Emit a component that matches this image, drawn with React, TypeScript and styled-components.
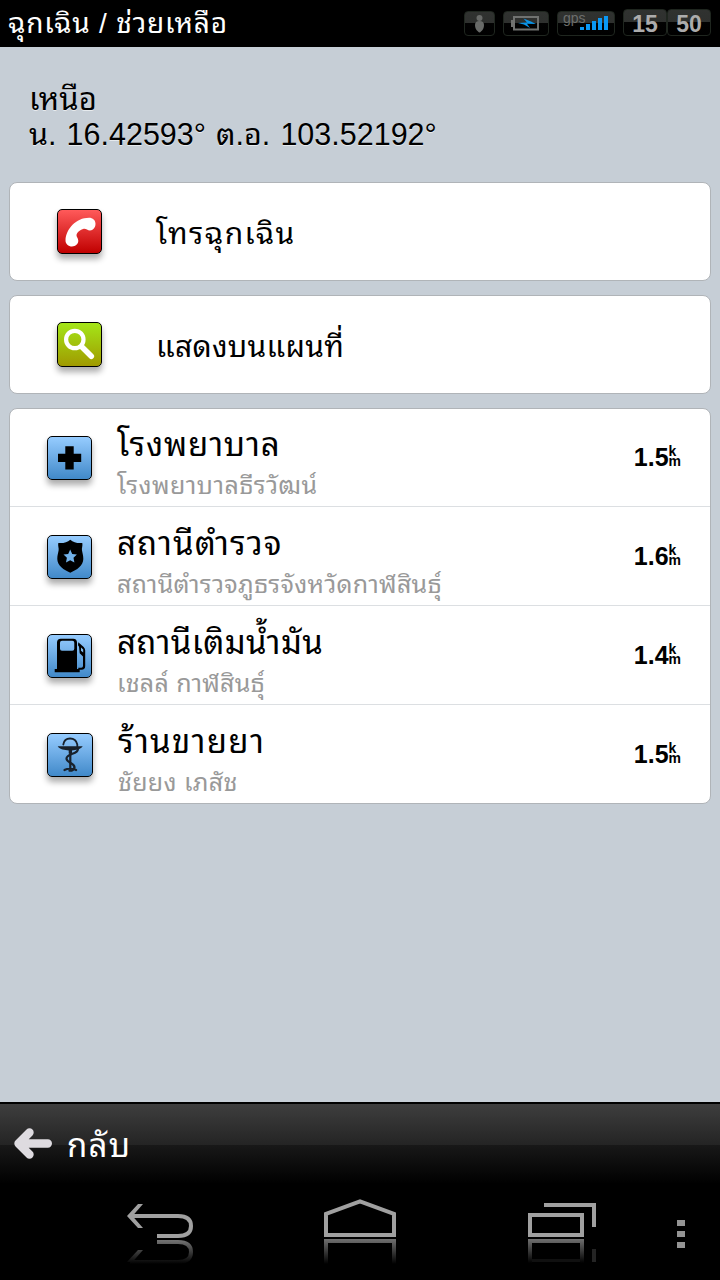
import React from 'react';
import styled, { createGlobalStyle } from 'styled-components';

const GlobalStyle = createGlobalStyle`
  * { box-sizing: border-box; }
  body { margin: 0; background: #000; }
`;

const Screen = styled.div`
  width: 720px;
  height: 1280px;
  display: flex;
  flex-direction: column;
  overflow: hidden;
  background: #c6ced6;
  color: #000;
  font-family: 'Liberation Sans', 'Noto Sans Thai Looped', 'Loma', 'Garuda', 'Waree', 'Noto Sans Thai', sans-serif;
`;

const Header = styled.header`
  height: 47px;
  flex: none;
  display: flex;
  justify-content: space-between;
  padding: 0 9px 0 8px;
  background: #000;
`;

const Label = styled.span<{ $size: number; $line: number; $color?: string; $spacing?: number; $words?: number; $glow?: boolean }>`
  display: block;
  white-space: nowrap;
  font-size: ${(p) => p.$size}px;
  line-height: ${(p) => p.$line}px;
  color: ${(p) => p.$color ?? '#000'};
  letter-spacing: ${(p) => p.$spacing ?? 0}px;
  word-spacing: ${(p) => p.$words ?? 0}px;
  text-shadow: ${(p) => (p.$glow ? '0 1px 0 rgba(255,255,255,0.6)' : 'none')};
`;

const StatusBar = styled.div`
  display: flex;
  align-items: flex-start;
  gap: 8px;
  padding-top: 9px;
`;

const Pill = styled.div<{ $width: number; $tall?: boolean }>`
  width: ${(p) => p.$width}px;
  height: ${(p) => (p.$tall ? 27 : 25)}px;
  margin-top: ${(p) => (p.$tall ? 0 : 2)}px;
  border: 1px solid #1f261f;
  border-radius: 4px;
  background: linear-gradient(#303230 0, #2e302e 50%, #020202 50%, #000 100%);
  display: flex;
  justify-content: center;
  svg { display: block; overflow: visible; }
`;

const Clock = styled.div`
  display: flex;
`;

const Digits = styled.span`
  font-size: 23px;
  font-weight: bold;
  line-height: 28px;
  color: #acacac;
`;

const GpsText = styled.text`
  font-size: 14px;
  fill: #6c6e6c;
`;

const Main = styled.main`
  flex: 1;
  min-height: 0;
  padding: 35px 9px 0;
  display: flex;
  flex-direction: column;
`;

const Position = styled.div`
  height: 86px;
  padding-left: 20px;
  margin-bottom: 14px;
`;

const Card = styled.section`
  flex: none;
  width: 702px;
  margin-bottom: 14px;
  background: #fff;
  border: 1px solid #b0b4b8;
  border-radius: 8px;
`;

const ActionRow = styled.div`
  height: 97px;
  display: flex;
  align-items: flex-start;
  padding: 26px 0 0 47px;
`;

const ActionText = styled.div`
  margin-left: 54px;
  padding-top: 5px;
`;

const PlaceRow = styled.div`
  height: 99px;
  display: flex;
  align-items: flex-start;
  padding: 28px 29px 0 37px;
  border-bottom: 1px solid #dcdfe2;
  &:first-child { height: 98px; padding-top: 27px; }
  &:last-child { border-bottom: 0; height: 98px; }
`;

const Tile = styled.div<{ $from: string; $to: string; $height?: number; $width?: number }>`
  flex: none;
  width: ${(p) => p.$width ?? 45}px;
  height: ${(p) => p.$height ?? 45}px;
  border: 1px solid #000;
  border-radius: 5px;
  background: linear-gradient(${(p) => p.$from}, ${(p) => p.$to});
  box-shadow: 0 5px 6px rgba(0, 0, 0, 0.33);
  svg { display: block; margin: -1px; }
`;

const PlaceText = styled.div`
  flex: 1;
  margin-left: 25px;
  margin-top: -13px;
`;

const Distance = styled.div`
  display: flex;
  font-weight: bold;
  font-size: 25px;
  line-height: 28px;
  margin-top: 7px;
`;

const Unit = styled.span`
  display: flex;
  flex-direction: column;
  font-size: 14px;
  line-height: 10px;
  padding-top: 3px;
`;

const BackBar = styled.footer`
  flex: none;
  height: 84px;
  border-top: 2px solid #000;
  display: flex;
  background: linear-gradient(#3e3e3e 0, #242424 41px, #181818 41px, #000 80px);
  svg { display: block; margin: 22px 0 0 12px; }
`;

const BackText = styled.div`
  margin: 22px 0 0 13px;
`;

const NavBar = styled.nav`
  flex: none;
  height: 94px;
  background: #000;
  display: grid;
  grid-template-columns: 197px 204px 149px 10px;
  padding: 12px 0 0 127px;
  svg { display: block; }
`;

const Arrow = () => (
  <svg width="42" height="36" viewBox="0 0 42 36">
    <path d="M17.500 6.500 6.500 17.500 17.500 28.500M8 17.500H35.800" fill="none" stroke="#dedbe0" strokeWidth="8.400" strokeLinecap="round" strokeLinejoin="round" />
  </svg>
);

const PhoneIcon = () => (
  <svg width="45" height="45" viewBox="0 0 45 45">
    <path fill="#fff" d="M8.500 31C9 20 19 8.700 32 8.700c3.800 0 6.500 2.400 6.500 6.100 0 4-2.500 6.600-5.500 6.600-2.600 0-4-2-6.300-1.600-3.500.8-6.700 3.700-7.200 6.200-.3 1.500 1.800 3 1.800 5.800 0 3.300-2.800 5.700-6.300 5.700S8.300 35 8.500 31Z" />
  </svg>
);

const SearchIcon = () => (
  <svg width="45" height="45" viewBox="0 0 45 45" fill="none" stroke="#fff">
    <circle cx="17.800" cy="17.500" r="8.700" strokeWidth="4.200" />
    <path d="m25 25 9.300 9.300" strokeWidth="5.600" strokeLinecap="round" />
  </svg>
);

const CrossIcon = () => (
  <svg width="45" height="44" viewBox="0 0 45 44">
    <path d="M18.300 10.300h8.400v7.500h7.500v8.200h-7.500v7.400h-8.400V26H11v-8.200h7.300Z" />
  </svg>
);

const ShieldIcon = () => (
  <svg width="45" height="44" viewBox="0 0 45 44">
    <path d="M23.300 4.700c3 2.600 7 3.800 12 3.300.6 3-.8 5-.3 7.500.5 2.700 1.300 5 1.300 8.500 0 6.500-6.500 11-13 13.700C16.800 35 10.300 30.500 10.300 24c0-3.500.8-5.800 1.300-8.500.5-2.500-.9-4.500-.3-7.500 5 .5 9-.7 12-3.300Z" />
    <path fill="#72b2ea" d="m23.200 14.600 2 4.300 4.700.6-3.400 3.300.9 4.700-4.200-2.300-4.200 2.300.9-4.700-3.400-3.300 4.700-.6Z" />
  </svg>
);

const FuelIcon = () => (
  <svg width="45" height="44" viewBox="0 0 45 44">
    <path fillRule="evenodd" d="M10 8.500q0-3.800 3.800-3.800h12.400Q30 4.700 30 8.500V35h2.700v3.300h-25V35H10ZM15 6.700q-2 0-2 2v6q0 2 2 2h10.300q2 0 2-2v-6q0-2-2-2Z" />
    <path d="M31.300 8.300 36.700 13q1.500 1.500 1.500 3.500V32q0 3.800-3.700 3.800h-3.200v-2h3q1.700 0 1.700-1.800v-9.500l-3.300-3.200-.7-6.500-1-1.500Z" />
    <path d="M34 13.500v3.300l2.200 1.700v-3Z" fill="#82bdf0" />
  </svg>
);

const PharmacyIcon = () => (
  <svg width="46" height="44" viewBox="0 0 46 44" fill="none" stroke="#18212b" strokeLinecap="round">
    <path d="M16.300 11.500C17.500 3.500 28.500 3.500 30.300 11.500v2" strokeWidth="1.800" />
    <path d="M10.700 13.300h25c-2.500 3.700-6.700 3.400-10.700 4.200v3h-3.300v-3c-4-.7-8.800-.5-11-4.200Z" fill="#18212b" stroke="none" />
    <path d="M23.300 17v19M17.500 37q3-1.500 5.800-1.200 3-.3 5.800 1.200" strokeWidth="2.200" />
    <path d="M30.800 16c1 5-11.300 4.500-11.300 9.500 0 4.500 8.500 4.500 8 9-.3 2-2.500 3.500-5 3.200" strokeWidth="2.200" />
  </svg>
);

const Fade = ({ id }: { id: string }) => (
  <linearGradient id={id} x1="0" y1="0" x2="0" y2="1">
    <stop offset="0" stopColor="#707070" />
    <stop offset="1" stopColor="#000" />
  </linearGradient>
);

const NavBack = () => (
  <svg width="70" height="70" viewBox="0 0 70 70" fill="none" strokeWidth="4">
    <defs>
      <linearGradient id="nb" gradientUnits="userSpaceOnUse" x1="0" y1="42" x2="0" y2="66">
        <stop offset="0" stopColor="#747474" />
        <stop offset="1" stopColor="#000" />
      </linearGradient>
    </defs>
    <path d="M3 18H51q13 0 13 10t-13 10H30" stroke="#a0a0a0" />
    <path d="M0 18 11 6h5L5.500 18 16 30h-5Z" fill="#a0a0a0" />
    <path d="M30 44H51q13 0 13 10t-13 10H3" stroke="url(#nb)" />
    <path d="M0 64 11 52h5L5.500 64Z" fill="url(#nb)" />
  </svg>
);

const NavHome = () => (
  <svg width="72" height="70" viewBox="0 0 72 70" fill="none" strokeWidth="4">
    <defs><Fade id="nh" /></defs>
    <path d="M2 37V16L36 3.300l34 12.700v21Z" stroke="#a0a0a0" />
    <path d="M0 41H72V66H68V45H4V66H0Z" fill="url(#nh)" />
  </svg>
);

const NavRecents = () => (
  <svg width="70" height="70" viewBox="0 0 70 70" fill="none" strokeWidth="4">
    <defs><Fade id="nr" /></defs>
    <path d="M2 17H54V37H2ZM16 7H66V29" stroke="#a0a0a0" />
    <path d="M0 41H56V65H52V45H4V65H0Z" fill="url(#nr)" />
    <path d="M64 51h4v13h-4Z" fill="#242424" />
    <path d="M4 62.500H52" stroke="#101010" strokeWidth="3" />
  </svg>
);

const NavMenu = () => (
  <svg width="8" height="52" viewBox="0 0 8 52" fill="#949494">
    <path d="M0 22h8v6H0ZM0 33h8v6H0ZM0 44h8v6H0Z" />
  </svg>
);

const places = [
  { name: 'โรงพยาบาล', nameGap: 0.85, detail: 'โรงพยาบาลธีรวัฒน์', detailGap: 0.45, km: '1.5', icon: <CrossIcon /> },
  { name: 'สถานีตำรวจ', nameGap: 1.15, detail: 'สถานีตำรวจภูธรจังหวัดกาฬสินธุ์', detailGap: 0.3, km: '1.6', icon: <ShieldIcon /> },
  { name: 'สถานีเติมน้ำมัน', nameGap: 0.4, detail: 'เชลล์ กาฬสินธุ์', detailGap: 0.25, km: '1.4', icon: <FuelIcon /> },
  { name: 'ร้านขายยา', nameGap: 1.3, detail: 'ชัยยง เภสัช', detailGap: 0.3, km: '1.5', icon: <PharmacyIcon />, width: 46 },
];

export default function App() {
  return (
    <Screen>
      <GlobalStyle />
      <Header>
        <Label $size={28} $line={48} $spacing={0.8} $color="#fff">ฉุกเฉิน / ช่วยเหลือ</Label>
        <StatusBar>
          <Pill $width={31}>
            <svg width="29" height="23" viewBox="0 0 29 23" fill="#686a68">
              <circle cx="14.500" cy="6" r="3" />
              <path d="M10 13q0-4 4.500-4t4.500 4q0 4-3 6.500-1.500 2-3 0-3-2.500-3-6.500Z" />
            </svg>
          </Pill>
          <Pill $width={46}>
            <svg width="44" height="23" viewBox="0 0 44 23">
              <path d="M10 5H34V17.500H10ZM8 8v7" fill="none" stroke="#707270" strokeWidth="2" />
              <path d="m14 11 9-.5-3.500-4 7.500 3 5 2.500-9-.2 3 4.200-6-3.500Z" fill="#0a94e8" />
            </svg>
          </Pill>
          <Pill $width={58}>
            <svg width="56" height="23" viewBox="0 0 56 23">
              <GpsText x="5" y="11">gps</GpsText>
              <path d="M22 15h4v3h-4ZM28 12h4v6h-4ZM34 9h4v9h-4ZM40 6h4v12h-4ZM46 4h4v14h-4Z" fill="#0a98f4" />
            </svg>
          </Pill>
          <Clock>
            <Pill $width={44} $tall><Digits>15</Digits></Pill>
            <Pill $width={44} $tall><Digits>50</Digits></Pill>
          </Clock>
        </StatusBar>
      </Header>
      <Main>
        <Position>
          <Label $size={31} $line={35} $glow>เหนือ</Label>
          <Label $size={30.5} $line={35} $words={1.6} $glow>น. 16.42593° ต.อ. 103.52192°</Label>
        </Position>
        <Card>
          <ActionRow>
            <Tile $from="#ff5a5a" $to="#c00000"><PhoneIcon /></Tile>
            <ActionText><Label $size={30} $line={40} $spacing={1.4} $glow>โทรฉุกเฉิน</Label></ActionText>
          </ActionRow>
        </Card>
        <Card>
          <ActionRow>
            <Tile $from="#a4e618" $to="#a09a00"><SearchIcon /></Tile>
            <ActionText><Label $size={30} $line={40} $spacing={0.3} $glow>แสดงบนแผนที่</Label></ActionText>
          </ActionRow>
        </Card>
        <Card>
          {places.map((p) => (
            <PlaceRow key={p.name}>
              <Tile $from="#96ccff" $to="#4189c9" $height={44} $width={p.width}>{p.icon}</Tile>
              <PlaceText>
                <Label $size={33} $line={44} $spacing={p.nameGap}>{p.name}</Label>
                <Label $size={25} $line={36} $spacing={p.detailGap} $color="#999">{p.detail}</Label>
              </PlaceText>
              <Distance>
                {p.km}
                <Unit><span>k</span><span>m</span></Unit>
              </Distance>
            </PlaceRow>
          ))}
        </Card>
      </Main>
      <BackBar>
        <Arrow />
        <BackText><Label $size={33} $line={40} $spacing={1.2} $color="#fff">กลับ</Label></BackText>
      </BackBar>
      <NavBar>
        <NavBack />
        <NavHome />
        <NavRecents />
        <NavMenu />
      </NavBar>
    </Screen>
  );
}
